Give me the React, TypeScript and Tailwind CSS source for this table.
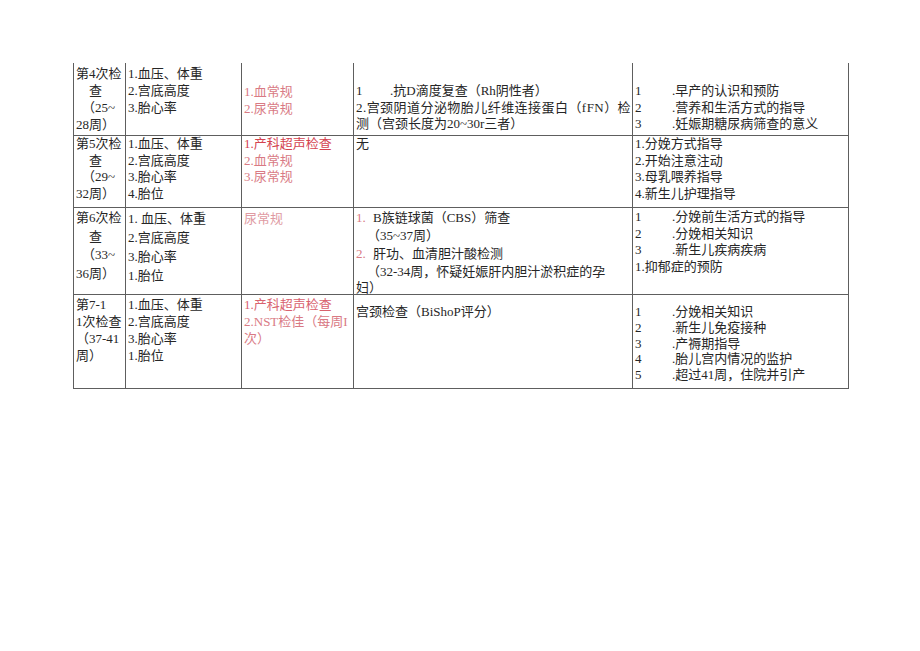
import { ReactNode } from "react";

// prenatal visit schedule table (continued page, no top rule)

function Cell({ children, className = "", last = false }: { children?: ReactNode; className?: string; last?: boolean }) {
  return (
    <div className={`border-b border-l border-[#5e5e5e] pl-[2px] ${last ? "border-r" : ""} ${className}`}>
      {children}
    </div>
  );
}

function Line({ children, className = "" }: { children: ReactNode; className?: string }) {
  return <div className={`whitespace-nowrap ${className}`}>{children}</div>;
}

function Tab({ n, text, w = "w-[37px]" }: { n: string; text: string; w?: string }) {
  return (
    <>
      <span className={`inline-block ${w}`}>{n}</span>
      {text}
    </>
  );
}

const red = "text-[#d4434f]";
const pink = "text-[#d97a84]";
const pale = "text-[#e09aa2]";

export default function App() {
  return (
    <div
      className="min-h-screen bg-white pl-[73px] pt-[63px] text-[13px] text-[#262626]"
      style={{ fontFamily: '"Liberation Serif", "Noto Sans CJK SC", serif' }}
    >
      <div className="grid w-[776px] grid-cols-[52px_116px_112px_279px_217px] grid-rows-[73px_72px_87px_94px]">
        {/* 第4次 */}
        <Cell className="pt-[2px] leading-[17px]">
          <Line>第4次检</Line>
          <Line className="pl-[13px]">查</Line>
          <Line className="pl-[6px]">（25~</Line>
          <Line>28周）</Line>
        </Cell>
        <Cell className="pt-[2px] leading-[17px]">
          <Line>1.血压、体重</Line>
          <Line>2.宫底高度</Line>
          <Line>3.胎心率</Line>
        </Cell>
        <Cell className={`pt-[20px] leading-[17px] ${pink}`}>
          <Line>1.血常规</Line>
          <Line>2.尿常规</Line>
        </Cell>
        <Cell className="pt-[20px] leading-[16.5px]">
          <Line>
            <Tab n="1" text=".抗D滴度复查（Rh阴性者）" w="w-[34px]" />
          </Line>
          <Line className="tracking-[0.45px]">2.宫颈阴道分泌物胎儿纤维连接蛋白（fFN）检</Line>
          <Line>测（宫颈长度为20~30r三者）</Line>
        </Cell>
        <Cell last className="pt-[20px] leading-[16.5px]">
          <Line>
            <Tab n="1" text=".早产的认识和预防" />
          </Line>
          <Line>
            <Tab n="2" text=".营养和生活方式的指导" />
          </Line>
          <Line>
            <Tab n="3" text=".妊娠期糖尿病筛查的意义" />
          </Line>
        </Cell>

        {/* 第5次 */}
        <Cell className="leading-[16.7px]">
          <Line>第5次检</Line>
          <Line className="pl-[13px]">查</Line>
          <Line className="pl-[6px]">（29~</Line>
          <Line>32周）</Line>
        </Cell>
        <Cell className="leading-[16.7px]">
          <Line>1.血压、体重</Line>
          <Line>2.宫底高度</Line>
          <Line>3.胎心率</Line>
          <Line>4.胎位</Line>
        </Cell>
        <Cell className="leading-[16.7px]">
          <Line className={red}>1.产科超声检查</Line>
          <Line className={pink}>2.血常规</Line>
          <Line className={pink}>3.尿常规</Line>
        </Cell>
        <Cell className="leading-[16.7px]">
          <Line>无</Line>
        </Cell>
        <Cell last className="leading-[16.7px]">
          <Line>1.分娩方式指导</Line>
          <Line>2.开始注意注动</Line>
          <Line>3.母乳喂养指导</Line>
          <Line>4.新生儿护理指导</Line>
        </Cell>

        {/* 第6次 */}
        <Cell className="pt-[1px] leading-[18.5px]">
          <Line>第6次检</Line>
          <Line className="pl-[13px]">查</Line>
          <Line className="pl-[6px]">（33~</Line>
          <Line>36周）</Line>
        </Cell>
        <Cell className="pt-[1px] leading-[19px]">
          <Line>1. 血压、体重</Line>
          <Line>2.宫底高度</Line>
          <Line>3.胎心率</Line>
          <Line>1.胎位</Line>
        </Cell>
        <Cell className={`pt-[1px] leading-[19px] ${pale}`}>
          <Line>尿常规</Line>
        </Cell>
        <Cell className="pt-[1px] leading-[18px]">
          <Line>
            <span className={`inline-block w-[17px] ${pink}`}>1.</span>B族链球菌（CBS）筛查
          </Line>
          <Line className="pl-[11px]">（35~37周）</Line>
          <Line>
            <span className={`inline-block w-[17px] ${pink}`}>2.</span>肝功、血清胆汁酸检测
          </Line>
          <Line className="pl-[11px]">（32-34周，怀疑妊娠肝内胆汁淤积症的孕</Line>
          <Line className="leading-[14px]">妇）</Line>
        </Cell>
        <Cell last className="pt-[1px] leading-[16.5px]">
          <Line>
            <Tab n="1" text=".分娩前生活方式的指导" />
          </Line>
          <Line>
            <Tab n="2" text=".分娩相关知识" />
          </Line>
          <Line>
            <Tab n="3" text=".新生儿疾病疾病" />
          </Line>
          <Line>1.抑郁症的预防</Line>
        </Cell>

        {/* 第7-11次 */}
        <Cell className="pt-[1px] leading-[17px]">
          <Line>第7-1</Line>
          <Line>1次检查</Line>
          <Line>（37-41</Line>
          <Line>周）</Line>
        </Cell>
        <Cell className="pt-[1px] leading-[17px]">
          <Line>1.血压、体重</Line>
          <Line>2.宫底高度</Line>
          <Line>3.胎心率</Line>
          <Line>1.胎位</Line>
        </Cell>
        <Cell className="pt-[1px] leading-[17px]">
          <Line className="text-[#d9626e]">1.产科超声检查</Line>
          <Line className={pink}>2.NST检佳（每周I</Line>
          <Line className={pink}>次）</Line>
        </Cell>
        <Cell className="pt-[8px] leading-[17px]">
          <Line>宫颈检查（BiShoP评分）</Line>
        </Cell>
        <Cell last className="pt-[9px] leading-[15.8px]">
          <Line>
            <Tab n="1" text=".分娩相关知识" />
          </Line>
          <Line>
            <Tab n="2" text=".新生儿免疫接种" />
          </Line>
          <Line>
            <Tab n="3" text=".产褥期指导" />
          </Line>
          <Line>
            <Tab n="4" text=".胎儿宫内情况的监护" />
          </Line>
          <Line>
            <Tab n="5" text=".超过41周，住院并引产" />
          </Line>
        </Cell>
      </div>
    </div>
  );
}
